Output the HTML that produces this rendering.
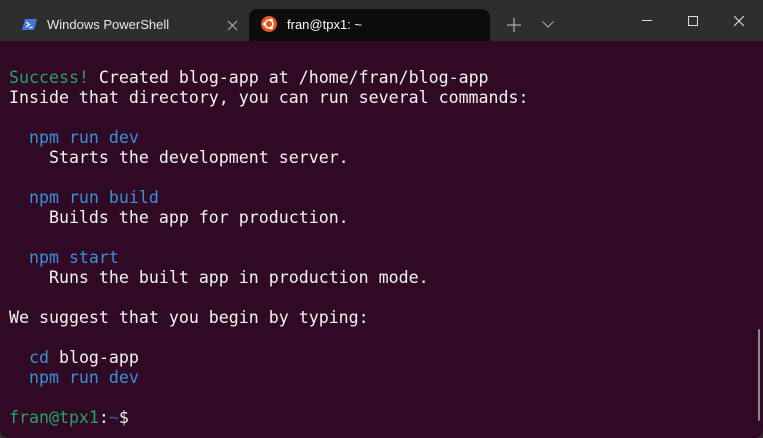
<!DOCTYPE html>
<html><head><meta charset="utf-8"><style>
html,body{margin:0;padding:0;width:763px;height:438px;overflow:hidden;background:#2e2e2e;}
.title{position:absolute;left:0;top:0;width:763px;height:41px;background:#2e2e2e;}
.tab1{position:absolute;left:0;top:9px;width:248px;height:32px;font:13px "Liberation Sans",sans-serif;color:#e6e6e6;}
.tab2{position:absolute;left:249px;top:9px;width:241px;height:32px;background:#0c0c0c;border-radius:8px 8px 0 0;font:13px "Liberation Sans",sans-serif;color:#fff;}
.term{position:absolute;left:0;top:41px;width:763px;height:397px;background:#300a24;border-radius:0 0 8px 8px;}
pre{position:absolute;left:9px;top:27px;margin:0;font:16.6px/20px "DejaVu Sans Mono","Liberation Mono",monospace;color:#f2f2f2;letter-spacing:0;}
.g{color:#26a269}.b{color:#3a8fd9}.d{color:#2a5fa8}
</style></head><body>
<div class="title">
 <div class="tab1">
  <svg style="position:absolute;left:22px;top:9px" width="15" height="13"><polygon points="3,1 15,1 12,12 0,12" fill="#3b78d8"/><path d="M4,4 L7.5,6.5 L4,9" stroke="#fff" stroke-width="1.3" fill="none"/><line x1="7.5" y1="9.5" x2="10.5" y2="9.5" stroke="#fff" stroke-width="1.2"/></svg>
  <span style="position:absolute;left:47px;top:8px">Windows PowerShell</span>
  <svg style="position:absolute;left:227px;top:11px" width="11" height="11"><path d="M1,1L10,10M10,1L1,10" stroke="#aaa" stroke-width="1.2"/></svg>
 </div>
 <div class="tab2">
  <svg style="position:absolute;left:12px;top:7px" width="16" height="16"><circle cx="8" cy="8" r="8" fill="#e95420"/><circle cx="8" cy="8" r="4" fill="none" stroke="#fff" stroke-width="1.6"/><circle cx="3.5" cy="8" r="1.5" fill="#fff"/><circle cx="10.3" cy="4" r="1.5" fill="#fff"/><circle cx="10.3" cy="12" r="1.5" fill="#fff"/></svg>
  <span style="position:absolute;left:38px;top:8px">fran@tpx1: ~</span>
 </div>
 <svg style="position:absolute;left:507px;top:18px" width="14" height="14"><path d="M7,0V14M0,7H14" stroke="#aaa" stroke-width="1.3"/></svg>
 <svg style="position:absolute;left:542px;top:21px" width="12" height="7"><path d="M0.5,0.5L6,6L11.5,0.5" stroke="#aaa" stroke-width="1.1" fill="none"/></svg>
 <div style="position:absolute;left:642px;top:20px;width:10px;height:1px;background:#ddd"></div>
 <div style="position:absolute;left:688px;top:16px;width:8px;height:8px;border:1px solid #ddd"></div>
 <svg style="position:absolute;left:734px;top:16px" width="10" height="10"><path d="M0,0L10,10M10,0L0,10" stroke="#ddd" stroke-width="1.1"/></svg>
</div>
<div class="term">
<pre><span class="g">Success!</span> Created blog-app at /home/fran/blog-app
Inside that directory, you can run several commands:

  <span class="b">npm run dev</span>
    Starts the development server.

  <span class="b">npm run build</span>
    Builds the app for production.

  <span class="b">npm start</span>
    Runs the built app in production mode.

We suggest that you begin by typing:

  <span class="b">cd</span> blog-app
  <span class="b">npm run dev</span>

<span class="g">fran@tpx1</span>:<span class="d">~</span>$</pre>
 <div style="position:absolute;left:758px;top:288px;width:2px;height:92px;background:#8a8a8a;border-radius:1px"></div>
</div>
</body></html>
